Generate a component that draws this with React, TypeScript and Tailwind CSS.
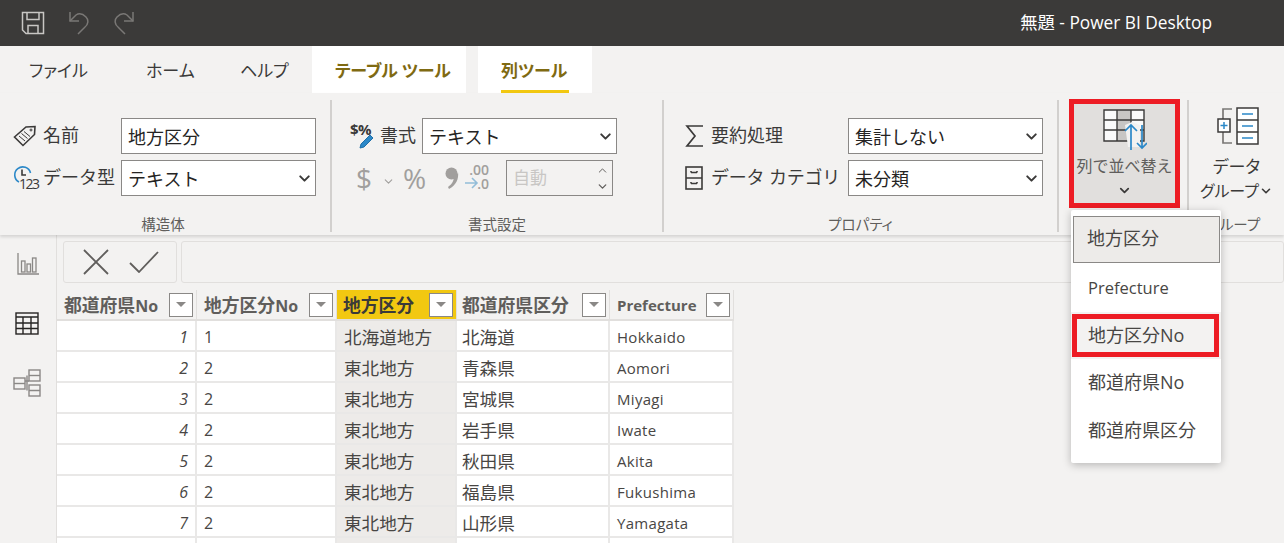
import { ChevronDown, ChevronUp } from "lucide-react";

const rows = [
  ["1", "1", "北海道地方", "北海道", "Hokkaido"],
  ["2", "2", "東北地方", "青森県", "Aomori"],
  ["3", "2", "東北地方", "宮城県", "Miyagi"],
  ["4", "2", "東北地方", "岩手県", "Iwate"],
  ["5", "2", "東北地方", "秋田県", "Akita"],
  ["6", "2", "東北地方", "福島県", "Fukushima"],
  ["7", "2", "東北地方", "山形県", "Yamagata"],
  ["", "", "", "", ""],
];

const headers = [
  { jp: "都道府県", no: "No" },
  { jp: "地方区分", no: "No" },
  { jp: "地方区分", no: "" },
  { jp: "都道府県区分", no: "" },
  { jp: "Prefecture", no: "" },
];

const SaveIcon = () => (
  <svg width="24" height="24" viewBox="0 0 24 24" fill="none" stroke="#c8c6c4" strokeWidth="1.5" className="ml-[21px]">
    <path d="M1.5 1.5h21v21H5l-3.5-3.5z" />
    <path d="M6 1.500v7h12v-7M7 22.500v-8h10v8" />
  </svg>
);

const UndoIcon = () => (
  <svg width="22" height="24" viewBox="0 0 22 24" fill="none" stroke="#7a7876" strokeWidth="1.5">
    <path d="M2 1v9h9" />
    <path d="M2 10l6-6c3-2 7-1 10 2 3 3 2 8-1 10l-7 7" />
  </svg>
);

const RedoIcon = () => (
  <svg width="22" height="24" viewBox="0 0 22 24" fill="none" stroke="#7a7876" strokeWidth="1.5">
    <path d="M20 1v9h-9" />
    <path d="M20 10l-6-6c-3-2-7-1-10 2-3 3-2 8 1 10l7 7" />
  </svg>
);

const TagIcon = () => (
  <svg width="24" height="22" viewBox="0 0 24 22" fill="none" stroke="#3b3a39" strokeWidth="1.6">
    <path d="M1.500 12L13 2l9-.500-.5 8L10 20.500z" />
    <path d="M6 11l6 5M8.500 8.500l6 5M11 6.500l6 5" strokeWidth="1" />
    <circle cx="18" cy="5" r="1" strokeWidth="1" />
  </svg>
);

const DataTypeIcon = () => (
  <div className="relative w-[25px] h-[26px]">
    <svg width="20" height="20" viewBox="0 0 20 20" fill="none" className="absolute left-0 top-0">
      <path d="M6 17A8 8 0 1 1 17.500 8" stroke="#2b88c8" strokeWidth="1.6" />
      <path d="M9 4.500V10h4" stroke="#3b3a39" strokeWidth="1.6" />
    </svg>
    <span className="absolute left-[6px] top-[10px] text-[14px] leading-[18px] tracking-[-1.5px] text-[#3b3a39]">123</span>
  </div>
);

const FormatIcon = () => (
  <div className="relative w-[25px] h-[26px]">
    <span className="absolute left-0 top-[-3px] text-[15px] leading-[18px] font-bold tracking-[-0.5px] text-[#3b3a39]">$%</span>
    <svg width="16" height="16" viewBox="0 0 16 16" fill="none" className="absolute left-[9px] top-[10px]">
      <path d="M1 15l1-4L11 2l3 3-9 9z" fill="#2b88c8" stroke="#1f6fa8" />
    </svg>
  </div>
);

const CommaIcon = () => (
  <svg width="14" height="22" viewBox="0 0 14 22" fill="#a19f9d">
    <circle cx="6.500" cy="6.500" r="6" />
    <path d="M9 8c3 0 4-1 4-3 1 7-2 13-9 17l-1-2c4-3 6-6 6-12z" />
  </svg>
);

const DecimalIcon = () => (
  <div className="relative w-[24px] h-[26px]">
    <span className="absolute right-0 top-[-1px] text-[14px] leading-[12px] text-[#a19f9d] font-semibold">.00</span>
    <span className="absolute right-0 top-[13px] text-[14px] leading-[12px] text-[#a19f9d] font-semibold">.0</span>
    <svg width="14" height="12" viewBox="0 0 14 12" fill="none" stroke="#93bdd8" strokeWidth="1.6" className="absolute left-0 top-[12px]">
      <path d="M0 6h12M7 1l5 5-5 5" />
    </svg>
  </div>
);

const SigmaIcon = () => (
  <svg width="18" height="22" viewBox="0 0 18 22" fill="none" stroke="#3b3a39" strokeWidth="1.7">
    <path d="M18 1H2l8 10-8 10h16" />
  </svg>
);

const CabinetIcon = () => (
  <svg width="18" height="24" viewBox="0 0 18 24" fill="none" stroke="#3b3a39" strokeWidth="1.600">
    <rect x="1" y="1" width="16" height="22" />
    <path d="M1 12h16M6 6.500h6M6 17.500h6M6 5v1.500M12 5v1.500M6 16v1.500M12 16v1.500" />
  </svg>
);

const SortIcon = () => (
  <svg width="44" height="44" viewBox="0 0 44 44" fill="none">
    <rect x="1" y="1" width="13" height="10" fill="#fafafa" />
    <rect x="1" y="11" width="13" height="10" fill="#fafafa" />
    <rect x="1" y="21" width="13" height="11" fill="#fafafa" />
    <rect x="14" y="1" width="14" height="31" fill="#c8c6c4" />
    <rect x="28" y="1" width="13" height="10" fill="#fafafa" />
    <rect x="28" y="11" width="13" height="10" fill="#fafafa" />
    <path d="M1 1h40v31H1zM14 1v31M28 1v31M1 11h40M1 21h40" stroke="#3b3a39" strokeWidth="1.4" />
    <path d="M22 16l7-3 8 3v22h-12z" fill="#f3f2f1" />
    <path d="M28 41V17M22 22l6-6 6 6" stroke="#2b88c8" strokeWidth="1.700" />
    <path d="M39 16v23M34 34l5 5 5-5" stroke="#2b88c8" strokeWidth="1.700" />
  </svg>
);

const GroupIcon = () => (
  <svg width="42" height="38" viewBox="0 0 42 38" fill="none">
    <path d="M15 2H6v10M6 25v11h9" stroke="#7a7876" strokeWidth="1.700" />
    <rect x="1" y="12" width="12" height="13" fill="#fff" stroke="#3b3a39" strokeWidth="1.500" />
    <path d="M3.500 18.500h7M7 15v7" stroke="#2b88c8" strokeWidth="1.500" />
    <rect x="20" y="1" width="21" height="36" fill="#fff" stroke="#3b3a39" strokeWidth="1.500" />
    <path d="M20 13h21M20 25h21" stroke="#3b3a39" strokeWidth="1.500" />
    <path d="M25 7h11M25 19h11M25 31h11" stroke="#2b88c8" strokeWidth="1.500" />
  </svg>
);

const ReportNavIcon = () => (
  <svg width="22" height="24" viewBox="0 0 22 24" fill="none" stroke="#8a8886" strokeWidth="1.300">
    <path d="M1 1v21h21" />
    <rect x="4.500" y="9" width="3.500" height="11" />
    <rect x="10" y="12" width="3.500" height="8" />
    <rect x="15.500" y="6" width="3.500" height="14" />
  </svg>
);

const TableNavIcon = () => (
  <svg width="24" height="23" viewBox="0 0 24 23" fill="none" stroke="#252423" strokeWidth="1.400">
    <rect x="1" y="1" width="22" height="21" />
    <path d="M1 5h22M1 11h22M1 16.500h22M8 5v17M16 5v17" />
  </svg>
);

const ModelNavIcon = () => (
  <svg width="28" height="28" viewBox="0 0 28 28" fill="none" stroke="#8a8886" strokeWidth="1.400">
    <rect x="1" y="9" width="11" height="11" />
    <path d="M1 14.500h11" />
    <rect x="16" y="1" width="11" height="11" />
    <path d="M16 6.500h11" />
    <rect x="16" y="16" width="11" height="11" />
    <path d="M16 21.500h11M12 12h4M14 6.500v15" />
  </svg>
);

const Field = ({ text, arrow = true }: { text: string; arrow?: boolean }) => (
  <div className="w-[195px] h-[36px] bg-white border-[1.5px] border-[#8a8886] flex items-center justify-between pl-[6px] pr-[2px] text-[18px] text-[#252423]">
    <span className="pt-[2px]">{text}</span>
    {arrow && <ChevronDown size={17} strokeWidth={2.800} className="text-[#3b3a39]" />}
  </div>
);

const GroupLabel = ({ text }: { text: string }) => (
  <div className="absolute left-0 right-0 bottom-[-2px] text-center text-[14.500px] leading-[18px] text-[#605e5c]">{text}</div>
);

const FilterButton = () => (
  <div className="w-[24px] h-[24px] bg-white border border-[#8a8886] flex items-center justify-center shrink-0">
    <div className="w-0 h-0 border-x-[5px] border-x-transparent border-t-[5px] border-t-[#8a8886]" />
  </div>
);

export default function App() {
  return (
    <div className="relative w-[1284px] h-[543px] overflow-hidden bg-[#f3f2f1] font-['Open_Sans','Noto_Sans_CJK_JP',sans-serif] text-[#3b3a39]">
      {/* Title bar */}
      <div className="h-[46px] bg-[#3b3a39] flex items-center">
        <SaveIcon />
        <div className="ml-[23px]"><UndoIcon /></div>
        <div className="ml-[23px]"><RedoIcon /></div>
        <div className="ml-auto mr-[72px] text-[17.300px] text-white">無題 - Power BI Desktop</div>
      </div>

      {/* Tabs */}
      <div className="h-[47px] flex pl-[29px] text-[17px] [font-feature-settings:'palt'] whitespace-nowrap">
        <div className="w-[117px] mt-[12px]">ファイル</div>
        <div className="w-[94px] mt-[12px]">ホーム</div>
        <div className="w-[72px] mt-[12px]">ヘルプ</div>
        <div className="w-[154px] bg-white pl-[23px] pt-[12px] font-bold text-[#7f6a12] tracking-[-0.2px]">テーブル ツール</div>
        <div className="ml-[12px] w-[114px] bg-white pt-[12px] px-[23px] font-bold text-[#7f6a12]">
          <div className="h-[35px] border-b-[3px] border-[#f2c811]">列ツール</div>
        </div>
      </div>

      {/* Ribbon */}
      <div className="relative z-10 h-[142px] flex pt-[6px] bg-[#f3f2f1] shadow-[0_2px_3px_rgba(0,0,0,0.13)]">
        {/* 構造体 */}
        <div className="relative mt-px w-[332px] h-[132px] border-r-2 border-[#d2d0ce] pl-[13px] pt-[18px] flex flex-col gap-[6px]">
          <div className="flex items-center">
            <div className="w-[30px]"><TagIcon /></div>
            <div className="w-[78px] text-[18px] leading-[26px] -mt-[3px]">名前</div>
            <Field text="地方区分" arrow={false} />
          </div>
          <div className="flex items-center">
            <div className="w-[30px]"><DataTypeIcon /></div>
            <div className="w-[78px] text-[18px] leading-[26px] -mt-[3px]">データ型</div>
            <Field text="テキスト" />
          </div>
          <div className="absolute left-0 right-[4px] bottom-0"><GroupLabel text="構造体" /></div>
        </div>

        {/* 書式設定 */}
        <div className="relative mt-px w-[332px] h-[132px] border-r-2 border-[#d2d0ce] pl-[18px] pt-[18px] flex flex-col gap-[6px]">
          <div className="flex items-center">
            <div className="w-[30px]"><FormatIcon /></div>
            <div className="w-[42px] text-[18px] leading-[26px] -mt-[3px]">書式</div>
            <Field text="テキスト" />
          </div>
          <div className="flex items-center text-[#a19f9d]">
            <div className="ml-[6px] w-[18px] text-[28px] leading-[36px]">$</div>
            <ChevronDown size={13} strokeWidth={2} className="ml-[8px] mt-[6px]" />
            <div className="ml-[8px] w-[35px] text-[28px] leading-[36px]">%</div>
            <div className="ml-[7px] w-[20px]"><CommaIcon /></div>
            <DecimalIcon />
            <div className="ml-[17px] w-[107px] h-[36px] border-[1.5px] border-[#8a8886] flex items-center justify-between pl-[6px] pr-[3px] text-[17px] text-[#c8c6c4]">
              <span>自動</span>
              <div className="flex flex-col text-[#605e5c]">
                <ChevronUp size={13} strokeWidth={1.800} />
                <ChevronDown size={13} strokeWidth={2.400} className="mt-[3px]" />
              </div>
            </div>
          </div>
          <GroupLabel text="書式設定" />
        </div>

        {/* プロパティ */}
        <div className="relative mt-px w-[395px] h-[132px] border-r-2 border-[#d2d0ce] pl-[21px] pt-[18px] flex flex-col gap-[6px]">
          <div className="flex items-center">
            <div className="w-[26px]"><SigmaIcon /></div>
            <div className="w-[137px] text-[18px] leading-[26px] -mt-[3px]">要約処理</div>
            <Field text="集計しない" />
          </div>
          <div className="flex items-center">
            <div className="w-[26px]"><CabinetIcon /></div>
            <div className="w-[137px] text-[18px] leading-[26px] -mt-[3px] whitespace-nowrap tracking-[-0.2px]">データ カテゴリ</div>
            <Field text="未分類" />
          </div>
          <div className="absolute inset-x-0 bottom-0 [font-feature-settings:'palt']"><GroupLabel text="プロパティ" /></div>
        </div>

        {/* 並べ替え */}
        <div className="ml-[10px] w-[111px] h-[109px] border-[5px] border-[#ed1c24] bg-[#e1dfdd] flex flex-col items-center pt-[5px]">
          <SortIcon />
          <div className="text-[16px] leading-[24px] mt-[1px] whitespace-nowrap text-[#605e5c]">列で並べ替え</div>
          <ChevronDown size={15} strokeWidth={2.800} className="mt-[5px]" />
        </div>

        {/* データグループ */}
        <div className="relative flex-1 flex flex-col items-center pt-[2px] ml-[7px] mt-px h-[132px] border-l-2 border-[#d2d0ce] [font-feature-settings:'palt']">
          <div className="mt-[5px] ml-[2px]"><GroupIcon /></div>
          <div className="mt-[10px] text-[17px] leading-[24px]">データ</div>
          <div className="flex items-center text-[16px] leading-[24px] whitespace-nowrap">
            グループ<ChevronDown size={14} strokeWidth={2.800} />
          </div>
          <div className="absolute left-0 right-[6px] bottom-0"><GroupLabel text="グループ" /></div>
        </div>
      </div>

      {/* Body */}
      <div className="h-[308px] flex">
        <div className="w-[57px] shrink-0 border-r border-[#e1dfdd] flex flex-col items-center">
          <div className="mt-[17px]"><ReportNavIcon /></div>
          <div className="mt-[36px] -ml-[2px]"><TableNavIcon /></div>
          <div className="mt-[34px] -ml-[3px]"><ModelNavIcon /></div>
        </div>
        <div className="flex-1 min-w-0">
          {/* Formula bar */}
          <div className="flex h-[42px] mt-[6px] ml-[6px] gap-[4px]">
            <div className="w-[114px] border border-[#e1dfdd] rounded-[3px] flex items-center">
              <svg width="26" height="26" viewBox="0 0 26 26" fill="none" stroke="#605e5c" strokeWidth="1.800" className="ml-[19px]">
                <path d="M1 1l24 24M25 1L1 25" />
              </svg>
              <svg width="30" height="22" viewBox="0 0 30 22" fill="none" stroke="#605e5c" strokeWidth="1.800" className="ml-[20px]">
                <path d="M1 12l9 9L29 1" />
              </svg>
            </div>
            <div className="flex-1 border border-[#e1dfdd] rounded-[3px]" />
          </div>

          {/* Table */}
          <div className="mt-[7px] w-[677px] grid grid-cols-[140px_140px_120px_153px_124px] bg-[#e1dfdd]">
            {headers.map((h, i) => (
              <div
                key={`${h.jp}-${i}`}
                className={`h-[31px] flex items-center justify-between pr-[3px] border-r border-b-2 border-[#e1dfdd] font-bold whitespace-nowrap ${
                  i === 2 ? "bg-[#f2c811] text-[#3b3a39]" : "bg-[#f3f2f1] text-[#605e5c]"
                } ${i === 3 ? "pl-[5px]" : i === 2 ? "pl-[6px]" : "pl-[7px]"}`}
              >
                <span className={i === 4 ? "text-[15px] pt-[2px]" : "text-[17.800px] pt-[1px]"}>
                  {h.jp}
                  {h.no && <span className="text-[16px]">{h.no}</span>}
                </span>
                <FilterButton />
              </div>
            ))}
            {rows.map((r, ri) =>
              r.map((cell, ci) => (
                <div
                  key={`${ri}-${ci}`}
                  className={`h-[31px] flex items-center pt-[3px] border-r-2 border-b-2 border-[#e9e8e7] whitespace-nowrap text-[#484644] ${
                    ci === 0 ? "justify-end italic pr-[7px]" : ci === 3 ? "pl-[5px]" : "pl-[7px]"
                  } ${ci === 2 ? "bg-[#edebe9]" : "bg-white"} ${
                    ci < 2 ? "text-[16px]" : ci === 4 ? "text-[15px] tracking-[0.3px]" : "text-[17.600px]"
                  }`}
                >
                  {cell}
                </div>
              ))
            )}
          </div>
        </div>
      </div>

      {/* Sort-by-column dropdown */}
      <div className="absolute z-20 left-[1071px] top-[210px] w-[150px] h-[253px] bg-white rounded-[2px] shadow-[0_2px_8px_rgba(0,0,0,0.25)] pt-[6px] text-[18px] text-[#484644]">
        <div className="mx-[2px] w-[147px] h-[47px] pb-[2px] bg-[#edebe9] border-[1.5px] border-[#8a8886] flex items-center pl-[13px]">地方区分</div>
        <div className="h-[49px] pt-[2px] flex items-center pl-[17px] text-[16.500px]">Prefecture</div>
        <div className="h-[47px] bg-[#f3f2f1] flex items-center">
          <div className="ml-px w-[147px] h-[43px] border-[5px] border-[#ed1c24] flex items-center pl-[11px]">地方区分No</div>
        </div>
        <div className="h-[47px] flex items-center pl-[17px]">都道府県No</div>
        <div className="h-[47px] pt-[2px] flex items-center pl-[17px]">都道府県区分</div>
      </div>
    </div>
  );
}
